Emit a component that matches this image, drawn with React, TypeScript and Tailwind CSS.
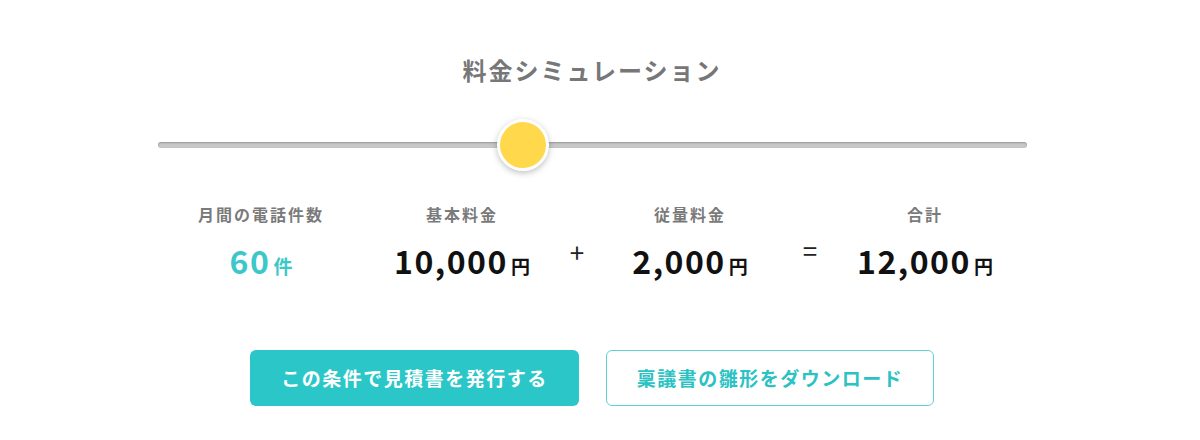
import React from 'react';

const font = { fontFamily: '"Noto Sans CJK JP", "Noto Sans", sans-serif' };

interface ColumnProps {
  label: string;
  value: string;
  unit: string;
  width: string;
  accent?: boolean;
}

const Column: React.FC<ColumnProps> = ({ label, value, unit, width, accent }) => (
  <div className={`${width} flex flex-col items-center`}>
    <div className="h-[24px] leading-[24px] text-[16px] font-bold tracking-[2px] text-[#7a7a7a]">{label}</div>
    <div className={`mt-[14px] h-[40px] flex items-baseline justify-center ${accent ? 'text-[#3cc8c8]' : 'text-[#111]'}`}>
      <span className="text-[32px] leading-[40px] font-bold tracking-[1.5px]">{value}</span>
      <span className="ml-[3px] text-[19px] font-bold">{unit}</span>
    </div>
  </div>
);

export default function App() {
  return (
    <div className="w-[1200px] h-[440px] bg-white" style={font}>
      <div className="w-[1184px] pt-[52px] flex flex-col items-center">
        <h2 className="h-[36px] leading-[36px] text-[24px] font-bold tracking-[2px] text-[#777]">
          料金シミュレーション
        </h2>

        <div className="mt-[31px] relative w-[869px] h-[52px] flex items-center">
          <div className="w-full h-[6px] rounded-full bg-[#c8c8c8] shadow-[inset_0_1px_2px_rgba(0,0,0,0.25)]" />
          <div className="absolute left-[339px] top-0 w-[52px] h-[52px] rounded-full bg-[#ffd84c] border-[3px] border-white shadow-[0_2px_6px_rgba(0,0,0,0.25)]" />
        </div>

        <div className="mt-[31px] flex w-[858px] ml-[-6px]">
          <Column label="月間の電話件数" value="60" unit="件" width="w-[202px]" accent />
          <Column label="基本料金" value="10,000" unit="円" width="w-[200px]" />
          <div className="w-[30px] mt-[36px] h-[28px] leading-[28px] text-center text-[26px] text-[#222]">+</div>
          <Column label="従量料金" value="2,000" unit="円" width="w-[196px]" />
          <div className="w-[44px] mt-[34px] h-[28px] leading-[28px] text-center text-[26px] text-[#222]">=</div>
          <Column label="合計" value="12,000" unit="円" width="w-[186px]" />
        </div>

        <div className="mt-[70px] flex gap-[27px]">
          <button
            type="button"
            className="w-[329px] h-[56px] rounded-[6px] bg-[#2bc7c8] text-white text-[19px] font-bold tracking-[1.5px]"
          >
            この条件で見積書を発行する
          </button>
          <button
            type="button"
            className="w-[328px] h-[56px] rounded-[6px] bg-white border border-[#5fd2d3] text-[#2bc2c3] text-[19px] font-bold tracking-[1.5px]"
          >
            稟議書の雛形をダウンロード
          </button>
        </div>
      </div>
    </div>
  );
}
